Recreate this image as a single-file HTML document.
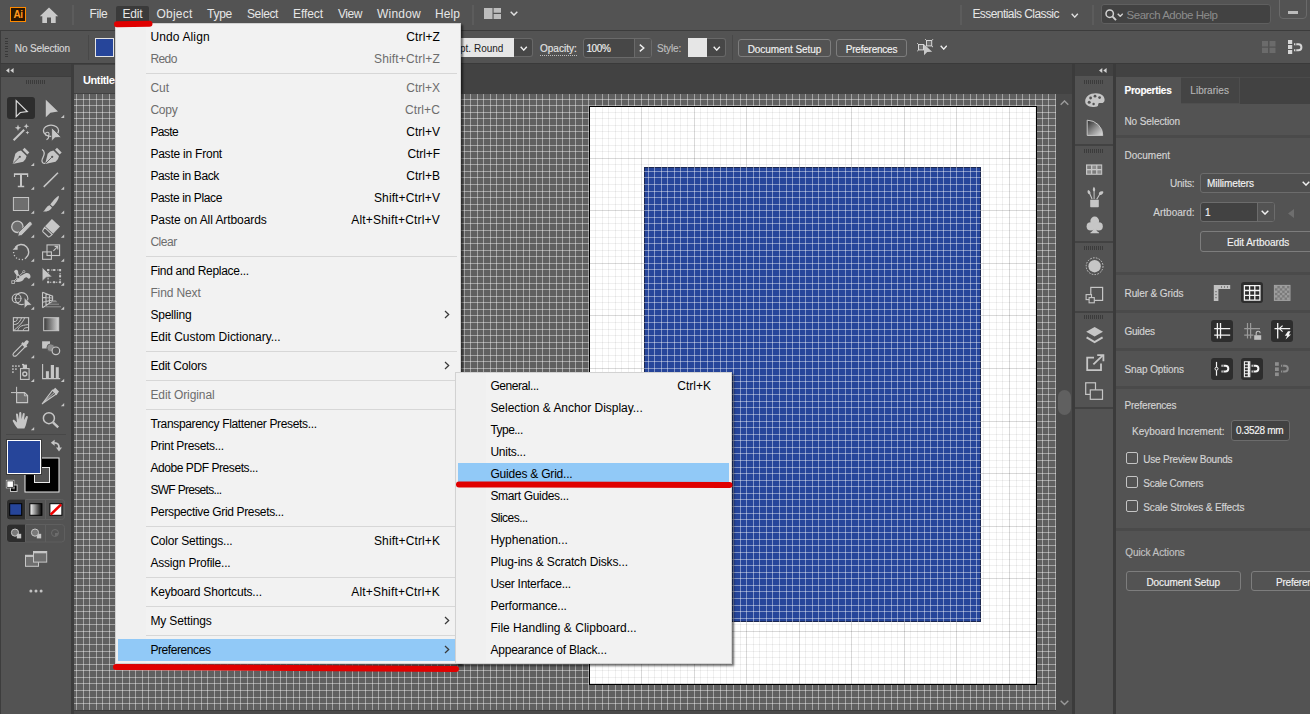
<!DOCTYPE html>
<html><head><meta charset="utf-8"><title>Illustrator</title>
<style>
*{box-sizing:border-box;margin:0;padding:0}
html,body{width:1310px;height:714px;overflow:hidden;background:#535353;font-family:"Liberation Sans",sans-serif;color:#dcdcdc;font-size:11px}
.abs{position:absolute}
#menubar{position:absolute;left:0;top:0;width:1310px;height:30px;background:#535353}
#menubar .mi{position:absolute;top:6px;font-size:13px;color:#e4e4e4;line-height:16px;white-space:nowrap}
#ctrl{position:absolute;left:0;top:30px;width:1310px;height:34px;background:#535353;border-top:1px solid #3c3c3c;border-bottom:1px solid #3a3a3a;box-shadow:inset 1px 0 0 #3c3c3c}
#tabs{position:absolute;left:72px;top:64px;width:1002px;height:30px;background:#424242}
#tab1{position:absolute;left:2px;top:1px;width:250px;height:28px;background:#535353;color:#fff;font-weight:bold;font-size:11px;line-height:30px;padding-left:9px;letter-spacing:-0.4px;white-space:nowrap;overflow:hidden}
#tools{position:absolute;left:0;top:64px;width:74px;height:650px;background:#535353;border-right:3px solid #3d3d3d}
#canvas{position:absolute;left:74px;top:94px;width:982px;height:616px;background:#606060;overflow:hidden}
#vscroll{position:absolute;left:1056px;top:94px;width:16px;height:620px;background:#4a4a4a}
#hscroll{position:absolute;left:74px;top:710px;width:982px;height:4px;background:#4a4a4a;border-top:1px solid #3d3d3d}
#dock{position:absolute;left:1072px;top:64px;width:44px;height:650px;background:#535353;border-left:3px solid #3b3b3b;border-right:3px solid #3b3b3b}
#props{position:absolute;left:1116px;top:64px;width:194px;height:650px;background:#535353}
.menu{position:absolute;background:#f2f2f2;border:1px solid #d2d2d2;color:#000;font-size:12px;padding:2px;box-shadow:2px 2px 2px rgba(0,0,0,.55)}
.menu:before{content:"";position:absolute;left:0;top:0;bottom:0;width:30px;background:#f0f0f0}
.menu .it{position:relative;height:22px;line-height:22px;white-space:nowrap}
.menu .it span.l{position:absolute;left:32.4px;top:0}
.menu .it span.r{position:absolute;right:18px;top:0}
.menu .it .chev{position:absolute;right:8.5px;top:6px}
.menu .dis{color:#6d6d6d}
.menu .sep{position:relative;height:7px}
.menu .sep i{position:absolute;left:28px;right:1px;top:3px;height:1px;background:#d7d7d7}
.menu .hl{background:#91c9f7}
#msub .it span.r{right:18px}

#menubar .mi{position:absolute;top:0;height:30px;line-height:28px;font-size:12px;color:#e6e6e6;white-space:nowrap}
.vsep{position:absolute;width:2px;background:#5c5c5c}
.chev{display:block}
#ctrl .lbl{-webkit-text-stroke:0.15px currentColor;margin-top:0.5px;position:absolute;font-size:10px;line-height:12px;white-space:nowrap}
.btn{-webkit-text-stroke:0.15px currentColor;position:absolute;border:1px solid #7d7d7d;border-radius:3px;color:#f2f2f2;font-size:10px;text-align:center;white-space:nowrap}
.inp{position:absolute;background:#474747;border:1px solid #6a6a6a;border-radius:3px;color:#f0f0f0;font-size:10px;white-space:nowrap}

.pg{position:absolute;left:0;top:0;width:0;height:0}
.t{-webkit-text-stroke:0.15px currentColor;margin-top:0.5px;position:absolute;font-size:10px;line-height:12px;white-space:nowrap;color:#d4d4d4}
.hd{position:absolute;background:#424242}
.dv{position:absolute;background:#4a4a4a;height:3px;left:1116px;width:194px}
.grip{position:absolute;height:4px;background:repeating-linear-gradient(90deg,#3b3b3b 0,#3b3b3b 1px,transparent 1px,transparent 2px)}
.dk{position:absolute;background:#2d2d2d;border-radius:3px}
.cb{position:absolute;width:12px;height:12px;border:1px solid #c4c4c4;border-radius:2px}
</style></head><body>
<div id="menubar">
<div class="abs" style="left:10px;top:7px;width:16px;height:15px;border:1px solid #ff8a00;background:#2b1600;color:#ff9a1f;font-weight:bold;font-size:10px;line-height:14px;text-align:center;letter-spacing:-0.4px">Ai</div>
<svg class="abs" style="left:39px;top:7px" width="20" height="17" viewBox="0 0 20 17"><path d="M10 0.5L0.8 9.2H3.3V16H8V10.6H12V16H16.7V9.2H19.2Z" fill="#c9c9c9"/></svg>
<div class="vsep" style="left:72px;top:5px;height:20px"></div>
<div class="abs" style="left:116px;top:6px;width:33px;height:17px;background:#3a3a3a;border-radius:2px"></div>
<div class="mi" style="left:89.5px"><span style="letter-spacing:-0.411px">File</span></div>
<div class="mi" style="left:122.5px"><span style="letter-spacing:-0.172px">Edit</span></div>
<div class="mi" style="left:156.5px"><span style="letter-spacing:0.219px">Object</span></div>
<div class="mi" style="left:207px"><span style="letter-spacing:-0.254px">Type</span></div>
<div class="mi" style="left:247px"><span style="letter-spacing:-0.393px">Select</span></div>
<div class="mi" style="left:293px"><span style="letter-spacing:-0.078px">Effect</span></div>
<div class="mi" style="left:338px"><span style="letter-spacing:-0.449px">View</span></div>
<div class="mi" style="left:377px"><span style="letter-spacing:0.219px">Window</span></div>
<div class="mi" style="left:435px"><span style="letter-spacing:0.078px">Help</span></div>
<div class="vsep" style="left:472px;top:5px;height:20px"></div>
<svg class="abs" style="left:484px;top:8px" width="17" height="11" viewBox="0 0 17 11"><path d="M0 0h8.5v11H0zM9.6 0H17v4.8H9.6zM9.6 6.1H17V11H9.6z" fill="#bdbdbd"/></svg>
<svg class="abs" style="left:509.5px;top:11px" width="8" height="5" viewBox="0 0 8 5"><path d="M0.7 0.7L4.0 4.1L7.3 0.7" fill="none" stroke="#e0e0e0" stroke-width="1.4"/></svg>
<div class="vsep" style="left:960px;top:5px;height:20px"></div>
<div class="mi" style="left:972.4px"><span style="letter-spacing:-0.567px">Essentials Classic</span></div>
<svg class="abs" style="left:1071px;top:13px" width="7.5" height="5" viewBox="0 0 7.5 5"><path d="M0.7 0.7L3.75 4.1L6.8 0.7" fill="none" stroke="#e0e0e0" stroke-width="1.4"/></svg>
<div class="vsep" style="left:1092px;top:5px;height:20px"></div>
<div class="abs" style="left:1101px;top:4px;width:170px;height:20px;background:#424242;border:1px solid #5f5f5f;border-radius:3px"></div>
<svg class="abs" style="left:1104.5px;top:9px" width="12" height="12" viewBox="0 0 12 12"><circle cx="4.7" cy="4.7" r="3.7" fill="none" stroke="#d2d2d2" stroke-width="1.5"/><path d="M7.4 7.4L11 11.2" stroke="#d2d2d2" stroke-width="1.9"/></svg>
<svg class="abs" style="left:1116.5px;top:12.5px" width="6.5" height="4.2" viewBox="0 0 6.5 4.2"><path d="M0.7 0.7L3.25 3.3000000000000003L5.8 0.7" fill="none" stroke="#cfcfcf" stroke-width="1.4"/></svg>
<div class="mi" style="left:1126.6px;color:#8c8c8c;line-height:31px"><span style="font-size:11.5px"><span style="letter-spacing:-0.489px">Search Adobe Help</span></span></div>
<div class="abs" style="left:1279px;top:-4px;width:28px;height:23px;border:1px solid #6a6a6a;border-radius:4px"></div>
<div class="abs" style="left:1288px;top:10.5px;width:10px;height:3px;background:#bcbcbc"></div>
</div>
<div id="ctrl"><div class="abs" style="left:0;top:-31px;width:1310px;height:0">
<div class="abs" style="left:5px;top:38px;width:3px;height:19px;background:repeating-linear-gradient(180deg,#393939 0,#393939 1px,transparent 1px,transparent 2.6px)"></div>
<div class="lbl" style="left:14.8px;top:42px;color:#d8d8d8"><span style="letter-spacing:-0.125px">No Selection</span></div>
<div class="vsep" style="left:88px;top:35px;height:25px;background:#484848;width:1px"></div>
<div class="abs" style="left:95px;top:38px;width:19px;height:19px;background:#26459a;border:1px solid #e4e4e4"></div>
<div class="abs" style="left:440px;top:38px;width:74px;height:19px;background:#e6e6e6;color:#1c1c1c;font-size:10px;line-height:21px;padding-left:20px;white-space:nowrap"><span style="letter-spacing:0.003px">pt. Round</span></div>
<div class="abs" style="left:514px;top:38px;width:19px;height:19px;background:#474747;border:1px solid #686868;border-left:none;border-radius:0 3px 3px 0"></div>
<svg class="abs" style="left:520px;top:45.5px" width="7.5" height="5" viewBox="0 0 7.5 5"><path d="M0.7 0.7L3.75 4.1L6.8 0.7" fill="none" stroke="#f0f0f0" stroke-width="1.4"/></svg>
<div class="lbl" style="left:540px;top:42px;color:#e4e4e4;border-bottom:1px dotted #bdbdbd;padding-bottom:0px"><span style="letter-spacing:0.014px">Opacity:</span></div>
<div class="inp" style="left:582.5px;top:37.5px;width:69px;height:20px"></div>
<div class="abs" style="left:633.5px;top:38.5px;width:1px;height:18px;background:#6a6a6a"></div>
<div class="abs" style="left:634.5px;top:38.5px;width:16px;height:18px;background:#535353;border-radius:0 2px 2px 0"></div>
<div class="lbl" style="left:586.4px;top:42px;color:#f0f0f0"><span style="letter-spacing:-0.345px">100%</span></div>
<svg class="abs" style="left:638.5px;top:44px" width="6" height="8" viewBox="0 0 6 8"><path d="M0.8 0.6L4.8 4L0.8 7.4" fill="none" stroke="#f0f0f0" stroke-width="1.4"/></svg>
<div class="lbl" style="left:657px;top:42px;color:#bdbdbd"><span style="letter-spacing:-0.169px">Style:</span></div>
<div class="abs" style="left:688px;top:38px;width:19px;height:19px;background:#e6e6e6"></div>
<div class="abs" style="left:707px;top:38px;width:19px;height:19px;background:#474747;border:1px solid #686868;border-left:none;border-radius:0 3px 3px 0"></div>
<svg class="abs" style="left:713px;top:45.5px" width="7.5" height="5" viewBox="0 0 7.5 5"><path d="M0.7 0.7L3.75 4.1L6.8 0.7" fill="none" stroke="#f0f0f0" stroke-width="1.4"/></svg>
<div class="vsep" style="left:732px;top:35px;height:25px;background:#484848;width:1px"></div>
<div class="btn" style="left:738px;top:38.5px;width:93px;height:18.5px;line-height:19px"><span style="letter-spacing:-0.057px">Document Setup</span></div>
<div class="btn" style="left:836px;top:38.5px;width:71px;height:18.5px;line-height:19px"><span style="letter-spacing:-0.220px">Preferences</span></div>
<svg class="abs" style="left:915px;top:38px" width="20" height="19" viewBox="915 38 20 19"><g stroke="#d6d6d6" stroke-width="1"><rect x="918.5" y="44.5" width="5" height="5.4" fill="#6e6e6e"/><rect x="926.5" y="40.5" width="5.2" height="5.4" fill="#6e6e6e"/><path d="M917.2 43.2L918.5 44.5M917.2 51.2L918.5 49.9M925.2 39.2L926.5 40.5M933 39.2L931.7 40.5M933 47.2L931.7 45.9" fill="none"/></g><path d="M924 44.2V55.3L927.2 52L932.2 51.8Z" fill="#c8c8c8"/></svg>
<svg class="abs" style="left:939.7px;top:44.5px" width="7.5" height="5" viewBox="0 0 7.5 5"><path d="M0.7 0.7L3.75 4.1L6.8 0.7" fill="none" stroke="#f0f0f0" stroke-width="1.4"/></svg>
<svg class="abs" style="left:1262px;top:40.5px" width="14" height="12" viewBox="0 0 14 12"><path d="M0 0h6v5.5H0zM7.5 0h6v5.5h-6zM0 6.8h6V12H0zM7.5 6.8h6V12h-6z" fill="#6b6b6b"/></svg>
<svg class="abs" style="left:1287px;top:39px" width="17" height="16" viewBox="1287 39 17 16"><path d="M1288 40h4.2v4H1288zM1288 45h4.2v4H1288zM1288 50h4.2v4H1288z" fill="#d6d6d6"/><path d="M1294 44.2H1298.4a3 3 0 0 1 0 6H1294" fill="none" stroke="#d6d6d6" stroke-width="2"/><path d="M1295.8 43V45.4M1295.8 49V51.4" stroke="#535353" stroke-width="0.9"/></svg>
</div></div>
<div id="tabs"><div id="tab1">Untitled-1* @ 66.67% (RGB/GPU Preview)</div></div>
<div id="tools"></div>
<div class="pg" id="tools2">
<div class="hd" style="left:1px;top:64px;width:70px;height:12px"></div>
<div class="abs" style="left:1px;top:76px;width:70px;height:1px;background:#3d3d3d"></div>
<div class="abs" style="left:0;top:64px;width:1px;height:650px;background:#3d3d3d"></div>
<svg class="abs" style="left:6px;top:68.3px" width="8" height="5" viewBox="0 0 8 5"><path d="M3.3 0L0 2.5L3.3 5ZM7.6 0L4.3 2.5L7.6 5Z" fill="#d2d2d2"/></svg>
<div class="grip" style="left:26px;top:80px;width:20px"></div>
<div class="dk" style="left:7px;top:97px;width:28px;height:22px"></div>
<!--TI0--><svg class="abs" style="left:0;top:0" width="76" height="714" viewBox="0 0 76 714"><defs><linearGradient id="tg" x1="0" x2="1" y1="0" y2="0"><stop offset="0" stop-color="#383838"/><stop offset="1" stop-color="#d6d6d6"/></linearGradient><linearGradient id="wg" x1="0" x2="1" y1="0" y2="0"><stop offset="0" stop-color="#fff"/><stop offset="1" stop-color="#000"/></linearGradient></defs><path d="M16.2 100.6V116.6L20.3 112.5L27.3 111.6Z" fill="none" stroke="#dedede" stroke-width="1.2" stroke-linejoin="miter"/><path d="M45.8 99.8V117.2L50.4 112.7L58 111.5Z" fill="#c6c6c6"/><path d="M64.2 114.7V118H60.900000000000006Z" fill="#c6c6c6"/><path d="M13.6 140.2L24.2 129.8" stroke="#c6c6c6" stroke-width="2" stroke-linecap="butt"/><path d="M18 124.6L18.896 126.904L21.2 127.8L18.896 128.696L18 131.0L17.104 128.696L14.8 127.8L17.104 126.904Z" fill="#c6c6c6"/><path d="M26.3 123.5L27.084 125.51599999999999L29.1 126.3L27.084 127.084L26.3 129.1L25.516000000000002 127.084L23.5 126.3L25.516000000000002 125.51599999999999Z" fill="#c6c6c6"/><path d="M27.4 130.7L27.932 132.06799999999998L29.299999999999997 132.6L27.932 133.132L27.4 134.5L26.868 133.132L25.5 132.6L26.868 132.06799999999998Z" fill="#c6c6c6"/><ellipse cx="51" cy="130.8" rx="7.6" ry="5.6" fill="none" stroke="#c6c6c6" stroke-width="1.3"/><circle cx="47.3" cy="134" r="1.8" fill="none" stroke="#c6c6c6" stroke-width="1.1"/><path d="M48.5 135.5Q49.5 138 46.5 139.8" fill="none" stroke="#c6c6c6" stroke-width="1.1"/><path d="M51.6 127.6V141.2L55 137.8L61.2 137.2Z" fill="#c6c6c6" stroke="#535353" stroke-width="0.8"/><path d="M12.7 163.9L15.3 153.8Q17.6 150.8 21 150.4L26.6 156Q26.2 159.4 23.2 161.8Z" fill="#c6c6c6"/><path d="M13.2 163.4L19.3 157.3" stroke="#535353" stroke-width="0.9"/><circle cx="19.8" cy="156.8" r="1.1" fill="#535353"/><path d="M22.6 149.7L24.6 147.7L29.3 152.4L27.3 154.4Z" fill="#c6c6c6"/><path d="M34.2 162.7V166H30.900000000000002Z" fill="#c6c6c6"/><path d="M45.099999999999994 163.9L47.7 153.8Q50.0 150.8 53.4 150.4L59.0 156Q58.599999999999994 159.4 55.599999999999994 161.8Z" fill="#c6c6c6"/><path d="M45.599999999999994 163.4L51.7 157.3" stroke="#535353" stroke-width="0.9"/><circle cx="52.2" cy="156.8" r="1.1" fill="#535353"/><path d="M55.0 149.7L57.0 147.7L61.7 152.4L59.7 154.4Z" fill="#c6c6c6"/><path d="M42 149.4C46.5 152 43.5 156.5 42.3 159C41.2 161.8 42.8 163.6 45 163.4" fill="none" stroke="#c6c6c6" stroke-width="1.2"/><path d="M13.9 173.3H28.2V177H27V175H22V185.8H24.2V187.2H17.8V185.8H20V175H15.1V177H13.9Z" fill="#c6c6c6"/><path d="M34.2 186.5V189.8H30.900000000000002Z" fill="#c6c6c6"/><path d="M43.7 186.9L58 172.8" stroke="#c6c6c6" stroke-width="1.5"/><path d="M64.2 186.5V189.8H60.900000000000006Z" fill="#c6c6c6"/><rect x="13.4" y="197.5" width="15.2" height="13" fill="#6e6e6e" stroke="#c6c6c6" stroke-width="1"/><path d="M34.2 210.5V213.8H30.900000000000002Z" fill="#c6c6c6"/><path d="M58.8 195.7C59.4 198.5 56 203.5 52.6 206.6L50.3 204.4C53 200.7 56.5 196.6 58.8 195.7Z" fill="#c6c6c6"/><path d="M49.6 205.2L51.9 207.4C50.8 210.6 46.5 211.8 42.9 211.5C45.6 210 45.8 206.6 49.6 205.2Z" fill="#c6c6c6"/><path d="M64.2 210.5V213.8H60.900000000000006Z" fill="#c6c6c6"/><circle cx="17.4" cy="226.8" r="5.7" fill="#6e6e6e" stroke="#c6c6c6" stroke-width="1.3"/><path d="M17.9 236.2L18.6 232.4L29.2 221.8Q31 221.2 31.9 222.9L32.2 224.4L21.8 235.3Z" fill="#c6c6c6" stroke="#535353" stroke-width="0.7"/><path d="M34.2 234.5V237.8H30.900000000000002Z" fill="#c6c6c6"/><path d="M51.9 219L60 226.5L53.2 233.8L45.1 226.3Z" fill="#c6c6c6"/><path d="M44.6 227.4L52.2 234.5L49.7 236.6Q48.8 237.2 47.9 236.5L43 231.9Q42.3 231 43 230.1Z" fill="none" stroke="#c6c6c6" stroke-width="1.1"/><path d="M64.2 234.5V237.8H60.900000000000006Z" fill="#c6c6c6"/><path d="M15.25 247.4A7.5 7.5 0 1 1 25.8 257.9" fill="none" stroke="#c6c6c6" stroke-width="1.4"/><path d="M25.8 257.9A7.5 7.5 0 0 1 13.6 251.6" fill="none" stroke="#c6c6c6" stroke-width="1.3" stroke-dasharray="1.2 1.9"/><path d="M12.6 249.8L17.6 244.8V249.8Z" fill="#c6c6c6"/><path d="M34.2 258.5V261.8H30.900000000000002Z" fill="#c6c6c6"/><rect x="47" y="244.9" width="12.6" height="10.6" fill="none" stroke="#c6c6c6" stroke-width="1.1"/><rect x="42.6" y="251.9" width="8.8" height="7.4" fill="none" stroke="#c6c6c6" stroke-width="1.1"/><path d="M53.4 250.8L57.6 246.6M54.6 246.4H57.8V249.6" fill="none" stroke="#c6c6c6" stroke-width="1.1"/><path d="M64.2 258.5V261.8H60.900000000000006Z" fill="#c6c6c6"/><path d="M14 271.5C15.5 268.5 18.5 269.5 18.2 272.5C18 275 20.5 276.5 23 274.5C26 272 30 272.5 30.5 276C30.8 278.5 28.5 279.5 27.6 278C26.5 276.5 24.5 277.5 23.6 279.6C22.4 282 18.5 282.6 14.2 281.6C16.6 279.8 17.6 277.6 16.4 275.2C15.8 273.8 14.6 273.2 14 271.5Z" fill="#c6c6c6"/><path d="M12.8 282.2L24.2 271.2" stroke="#535353" stroke-width="1.6"/><path d="M12.8 282.2L24.2 271.2" stroke="#c6c6c6" stroke-width="0.9"/><rect x="11.8" y="280.8" width="2.6" height="2.6" fill="#535353" stroke="#c6c6c6" stroke-width="0.8"/><circle cx="18.2" cy="277" r="1.6" fill="#535353" stroke="#c6c6c6" stroke-width="0.8"/><circle cx="23.8" cy="271.6" r="1.1" fill="#535353" stroke="#c6c6c6" stroke-width="0.7"/><path d="M34.2 282.5V285.8H30.900000000000002Z" fill="#c6c6c6"/><rect x="48.1" y="270" width="12" height="12.2" fill="none" stroke="#c6c6c6" stroke-width="1.1" stroke-dasharray="1.6 1.4"/><rect x="47.1" y="269" width="2" height="2" fill="#c6c6c6"/><rect x="53.1" y="269" width="2" height="2" fill="#c6c6c6"/><rect x="59.1" y="269" width="2" height="2" fill="#c6c6c6"/><rect x="59.1" y="275.1" width="2" height="2" fill="#c6c6c6"/><rect x="47.1" y="281.2" width="2" height="2" fill="#c6c6c6"/><rect x="53.1" y="281.2" width="2" height="2" fill="#c6c6c6"/><rect x="59.1" y="281.2" width="2" height="2" fill="#c6c6c6"/><path d="M42.2 267.4V281.2L46.2 277.4L52.2 276.8Z" fill="#c6c6c6" stroke="#535353" stroke-width="0.6"/><path d="M64.2 282.5V285.8H60.900000000000006Z" fill="#c6c6c6"/><circle cx="16.6" cy="298.4" r="4.4" fill="none" stroke="#c6c6c6" stroke-width="1.1"/><ellipse cx="21.6" cy="298.6" rx="6.3" ry="6" fill="none" stroke="#c6c6c6" stroke-width="1.1"/><path d="M14.4 298.4H22" stroke="#c6c6c6" stroke-width="1" stroke-dasharray="1 1"/><path d="M24.2 297.6V308.6L27.2 305.6L32 305Z" fill="#c6c6c6" stroke="#535353" stroke-width="0.7"/><path d="M34.2 306.5V309.8H30.900000000000002Z" fill="#c6c6c6"/><path d="M42.5 292.3V307.8M42.5 292.3L52.6 296.2V301.2L42.5 307.8M46 293.7V305.5M49.4 295V303.3M42.5 297.4L52.6 298M42.5 302.2L52.6 300" fill="none" stroke="#c6c6c6" stroke-width="1.1"/><path d="M53.4 300.2H55.8L57.4 302.2H50.5Z" fill="#8a8a8a"/><path d="M48.5 304.2H59M45.5 306.8H61" stroke="#9a9a9a" stroke-width="0.9"/><path d="M64.2 306.5V309.8H60.900000000000006Z" fill="#c6c6c6"/><rect x="13.4" y="317.7" width="15.2" height="13" fill="none" stroke="#c6c6c6" stroke-width="1.1"/><path d="M13.4 330.7C17 328 23.5 322 24.6 317.7M13.4 324.5C17 324.8 19.5 323 21.6 317.7M17.8 330.7C18.4 327 20.6 325.2 28.6 324.6M23.4 330.7C23.2 328.4 24.8 327.6 28.6 327.4M17.2 317.7C17.6 320.2 16.4 322 13.4 321.6" fill="none" stroke="#c6c6c6" stroke-width="1"/><rect x="43.7" y="317.7" width="15" height="13" fill="url(#tg)" stroke="#c6c6c6" stroke-width="1"/><path d="M13.4 355.8Q12.4 354.6 13.6 353.2L22.4 344.4L25 347L16.2 355.8Q14.8 356.8 13.4 355.8Z" fill="none" stroke="#c6c6c6" stroke-width="1.1"/><path d="M21.2 343.6L22.8 342L23.8 343Q25.5 340.4 26.6 340.2Q28.2 340.2 28.8 341.6Q28.8 343.4 26.4 345.2L27.4 346.2L25.8 347.8Z" fill="#c6c6c6"/><path d="M34.2 355.0V358.3H30.900000000000002Z" fill="#c6c6c6"/><rect x="42.1" y="341.3" width="7.9" height="7.2" fill="#c6c6c6"/><circle cx="50.8" cy="347.8" r="3.9" fill="#8c8c8c" stroke="#535353" stroke-width="0.8"/><circle cx="55.9" cy="350.8" r="3.8" fill="#535353" stroke="#c6c6c6" stroke-width="1.2"/><rect x="20.5" y="368.6" width="8.6" height="10.8" fill="none" stroke="#c6c6c6" stroke-width="1.1"/><rect x="22.8" y="364.6" width="4.2" height="4" fill="#c6c6c6"/><rect x="22" y="363.9" width="2" height="1.4" fill="#c6c6c6"/><circle cx="24.8" cy="374" r="2" fill="none" stroke="#c6c6c6" stroke-width="1.4"/><rect x="12" y="365.2" width="1.8" height="1.8" fill="#a8a8a8"/><rect x="15" y="365.2" width="1.8" height="1.8" fill="#a8a8a8"/><rect x="18" y="365.2" width="1.8" height="1.8" fill="#a8a8a8"/><rect x="12" y="368.2" width="1.8" height="1.8" fill="#a8a8a8"/><rect x="15" y="368.2" width="1.8" height="1.8" fill="#a8a8a8"/><rect x="12" y="371.2" width="1.8" height="1.8" fill="#a8a8a8"/><path d="M34.2 378.7V382H30.900000000000002Z" fill="#c6c6c6"/><path d="M42.6 364V378.6H60.2" fill="none" stroke="#c6c6c6" stroke-width="1.1"/><rect x="45.9" y="371.2" width="3" height="7" fill="#c6c6c6"/><rect x="50.8" y="365" width="3.2" height="13.2" fill="#c6c6c6"/><rect x="55.8" y="367.2" width="3" height="11" fill="#c6c6c6"/><path d="M64.2 378.7V382H60.900000000000006Z" fill="#c6c6c6"/><path d="M16.6 392.6H24.6L27.6 395.6V402.6H16.6Z" fill="#6e6e6e" stroke="#c6c6c6" stroke-width="1.1"/><path d="M24.4 392.6V395.8H27.6" fill="none" stroke="#c6c6c6" stroke-width="0.9"/><path d="M11 392.6H16M16.6 386.8V392" stroke="#c6c6c6" stroke-width="1"/><path d="M42.2 403.8L52.6 390.2L56.6 393.8Z" fill="none" stroke="#c6c6c6" stroke-width="1.1" stroke-linejoin="round"/><path d="M42.8 403.2L54.8 392" stroke="#c6c6c6" stroke-width="0.9"/><path d="M52.2 390.4L55.3 387.8L59 391.6L56.4 395.2Z" fill="#c6c6c6"/><path d="M64.2 403.0V406.3H60.900000000000006Z" fill="#c6c6c6"/><path d="M17.6 428.4C15.6 426.5 14 423.4 12.8 421.2C12.4 420 13.6 419.4 14.6 420.2L17 422.6L16 414.6C16 413.2 17.8 413.2 18 414.6L19 419.4L19.2 413C19.4 411.6 21.2 411.6 21.3 413L21.6 419.2L22.8 413.8C23.2 412.5 24.8 412.8 24.7 414.2L24 420L26 416.4C26.8 415.4 28.2 416 27.8 417.4C26.8 420.6 26.4 424.6 24.4 428.4Z" fill="#c6c6c6"/><path d="M34.2 427.0V430.3H30.900000000000002Z" fill="#c6c6c6"/><circle cx="48.9" cy="418.2" r="5.5" fill="none" stroke="#c6c6c6" stroke-width="1.5"/><path d="M53 422.4L58.2 427.4" stroke="#c6c6c6" stroke-width="2.4"/><rect x="6" y="434" width="60" height="1" fill="#484848"/><rect x="25" y="458" width="34" height="34" fill="#000" stroke="#e8e8e8" stroke-width="1"/><rect x="34.5" y="467.5" width="15" height="15" fill="#535353" stroke="#e8e8e8" stroke-width="1"/><rect x="6.5" y="439.5" width="35" height="35" fill="#fff" stroke="#3a3a3a" stroke-width="1"/><rect x="8" y="441" width="32" height="32" fill="#26459a"/><path d="M54.2 442.8C58 442.6 59.2 445 59 448" fill="none" stroke="#c6c6c6" stroke-width="1.8"/><path d="M50.8 442.8L54.6 439.8V445.8Z" fill="#c6c6c6"/><path d="M56 447.4H62L59 451.4Z" fill="#c6c6c6"/><rect x="10.5" y="485" width="6.6" height="6.4" fill="#000" stroke="#dcdcdc" stroke-width="0.9"/><rect x="12.6" y="487" width="2.4" height="2.4" fill="#535353"/><rect x="6.8" y="480.8" width="6.6" height="6.6" fill="#fff" stroke="#000" stroke-width="0.9"/><rect x="6.2" y="480.2" width="7.8" height="7.8" fill="none" stroke="#dcdcdc" stroke-width="0.6"/><rect x="7" y="499.5" width="57.5" height="20" rx="3" fill="none" stroke="#5f5f5f" stroke-width="1"/><path d="M10 499.5H25.5V519.5H10A3 3 0 0 1 7 516.5V502.5A3 3 0 0 1 10 499.5Z" fill="#2d2d2d"/><path d="M25.5 499.5V519.5M45.5 499.5V519.5" stroke="#5f5f5f" stroke-width="1"/><rect x="9.7" y="503.7" width="12" height="11.6" fill="#26459a" stroke="#000" stroke-width="1"/><rect x="29.9" y="503.7" width="12" height="11.6" fill="url(#wg)" stroke="#000" stroke-width="1"/><rect x="49.9" y="503.7" width="12" height="11.6" fill="#fff" stroke="#000" stroke-width="1"/><path d="M50.6 514.6L61.2 504.4" stroke="#f00000" stroke-width="2.6"/><rect x="7" y="524.5" width="57.5" height="17.5" rx="3" fill="none" stroke="#5f5f5f" stroke-width="1"/><path d="M10 524.5H25.5V542H10A3 3 0 0 1 7 539V527.5A3 3 0 0 1 10 524.5Z" fill="#2d2d2d"/><path d="M25.5 524.5V542M45.5 524.5V542" stroke="#5f5f5f" stroke-width="1"/><circle cx="15" cy="532.6" r="3.6" fill="#7a7a7a" stroke="#c6c6c6" stroke-width="1"/><rect x="16.8" y="533.8" width="4.4" height="4.6" fill="#c6c6c6"/><rect x="36.8" y="533.8" width="4.4" height="4.6" fill="#c6c6c6"/><circle cx="35" cy="532.6" r="3.6" fill="#7a7a7a" stroke="#c6c6c6" stroke-width="1"/><circle cx="55" cy="533" r="3.5" fill="none" stroke="#6c6c6c" stroke-width="1"/><path d="M55 533H58.2A3.3 3.3 0 0 1 55 536.3Z" fill="#6c6c6c"/><rect x="25.5" y="555.3" width="13" height="11" fill="#6e6e6e" stroke="#c6c6c6" stroke-width="1"/><rect x="25.5" y="555.3" width="13" height="1.6" fill="#c6c6c6"/><rect x="33.5" y="551.5" width="13.2" height="10.6" fill="#6e6e6e" stroke="#c6c6c6" stroke-width="1"/><rect x="33.5" y="551.5" width="13.2" height="1.8" fill="#c6c6c6"/><circle cx="30.9" cy="591" r="1.5" fill="#c2c2c2"/><circle cx="36" cy="591" r="1.5" fill="#c2c2c2"/><circle cx="41.1" cy="591" r="1.5" fill="#c2c2c2"/></svg><!--TI1-->
</div>
<div id="canvas">
<svg width="982" height="616" viewBox="0 0 982 616" style="position:absolute;left:0;top:0" shape-rendering="crispEdges">
<defs><path id="gv" d="M2.5 0V616M9.5 0V616M15.5 0V616M22.5 0V616M28.5 0V616M35.5 0V616M41.5 0V616M48.5 0V616M55.5 0V616M61.5 0V616M68.5 0V616M74.5 0V616M81.5 0V616M87.5 0V616M94.5 0V616M100.5 0V616M107.5 0V616M114.5 0V616M120.5 0V616M127.5 0V616M133.5 0V616M140.5 0V616M146.5 0V616M153.5 0V616M160.5 0V616M166.5 0V616M173.5 0V616M179.5 0V616M186.5 0V616M192.5 0V616M199.5 0V616M206.5 0V616M212.5 0V616M219.5 0V616M225.5 0V616M232.5 0V616M238.5 0V616M245.5 0V616M252.5 0V616M258.5 0V616M265.5 0V616M271.5 0V616M278.5 0V616M284.5 0V616M291.5 0V616M298.5 0V616M304.5 0V616M311.5 0V616M317.5 0V616M324.5 0V616M330.5 0V616M337.5 0V616M344.5 0V616M350.5 0V616M357.5 0V616M363.5 0V616M370.5 0V616M376.5 0V616M383.5 0V616M390.5 0V616M396.5 0V616M403.5 0V616M409.5 0V616M416.5 0V616M422.5 0V616M429.5 0V616M436.5 0V616M442.5 0V616M449.5 0V616M455.5 0V616M462.5 0V616M468.5 0V616M475.5 0V616M482.5 0V616M488.5 0V616M495.5 0V616M501.5 0V616M508.5 0V616M514.5 0V616M521.5 0V616M528.5 0V616M534.5 0V616M541.5 0V616M547.5 0V616M554.5 0V616M560.5 0V616M567.5 0V616M574.5 0V616M580.5 0V616M587.5 0V616M593.5 0V616M600.5 0V616M606.5 0V616M613.5 0V616M620.5 0V616M626.5 0V616M633.5 0V616M639.5 0V616M646.5 0V616M652.5 0V616M659.5 0V616M666.5 0V616M672.5 0V616M679.5 0V616M685.5 0V616M692.5 0V616M698.5 0V616M705.5 0V616M712.5 0V616M718.5 0V616M725.5 0V616M731.5 0V616M738.5 0V616M744.5 0V616M751.5 0V616M758.5 0V616M764.5 0V616M771.5 0V616M777.5 0V616M784.5 0V616M790.5 0V616M797.5 0V616M804.5 0V616M810.5 0V616M817.5 0V616M823.5 0V616M830.5 0V616M836.5 0V616M843.5 0V616M850.5 0V616M856.5 0V616M863.5 0V616M869.5 0V616M876.5 0V616M882.5 0V616M889.5 0V616M896.5 0V616M902.5 0V616M909.5 0V616M915.5 0V616M922.5 0V616M928.5 0V616M935.5 0V616M942.5 0V616M948.5 0V616M955.5 0V616M961.5 0V616M968.5 0V616M974.5 0V616M981.5 0V616"/><path id="gh" d="M0 5.5H982M0 11.5H982M0 18.5H982M0 24.5H982M0 31.5H982M0 37.5H982M0 44.5H982M0 51.5H982M0 57.5H982M0 64.5H982M0 70.5H982M0 77.5H982M0 83.5H982M0 90.5H982M0 97.5H982M0 103.5H982M0 110.5H982M0 116.5H982M0 123.5H982M0 129.5H982M0 136.5H982M0 143.5H982M0 149.5H982M0 156.5H982M0 162.5H982M0 169.5H982M0 175.5H982M0 182.5H982M0 189.5H982M0 195.5H982M0 202.5H982M0 208.5H982M0 215.5H982M0 221.5H982M0 228.5H982M0 235.5H982M0 241.5H982M0 248.5H982M0 254.5H982M0 261.5H982M0 267.5H982M0 274.5H982M0 281.5H982M0 287.5H982M0 294.5H982M0 300.5H982M0 307.5H982M0 313.5H982M0 320.5H982M0 327.5H982M0 333.5H982M0 340.5H982M0 346.5H982M0 353.5H982M0 359.5H982M0 366.5H982M0 373.5H982M0 379.5H982M0 386.5H982M0 392.5H982M0 399.5H982M0 405.5H982M0 412.5H982M0 419.5H982M0 425.5H982M0 432.5H982M0 438.5H982M0 445.5H982M0 451.5H982M0 458.5H982M0 465.5H982M0 471.5H982M0 478.5H982M0 484.5H982M0 491.5H982M0 497.5H982M0 504.5H982M0 511.5H982M0 517.5H982M0 524.5H982M0 530.5H982M0 537.5H982M0 543.5H982M0 550.5H982M0 557.5H982M0 563.5H982M0 570.5H982M0 576.5H982M0 583.5H982M0 589.5H982M0 596.5H982M0 603.5H982M0 609.5H982"/><path id="gvmin" d="M2.5 0V616M9.5 0V616M15.5 0V616M22.5 0V616M28.5 0V616M35.5 0V616M48.5 0V616M55.5 0V616M61.5 0V616M68.5 0V616M74.5 0V616M81.5 0V616M87.5 0V616M100.5 0V616M107.5 0V616M114.5 0V616M120.5 0V616M127.5 0V616M133.5 0V616M140.5 0V616M153.5 0V616M160.5 0V616M166.5 0V616M173.5 0V616M179.5 0V616M186.5 0V616M192.5 0V616M206.5 0V616M212.5 0V616M219.5 0V616M225.5 0V616M232.5 0V616M238.5 0V616M245.5 0V616M258.5 0V616M265.5 0V616M271.5 0V616M278.5 0V616M284.5 0V616M291.5 0V616M298.5 0V616M311.5 0V616M317.5 0V616M324.5 0V616M330.5 0V616M337.5 0V616M344.5 0V616M350.5 0V616M363.5 0V616M370.5 0V616M376.5 0V616M383.5 0V616M390.5 0V616M396.5 0V616M403.5 0V616M416.5 0V616M422.5 0V616M429.5 0V616M436.5 0V616M442.5 0V616M449.5 0V616M455.5 0V616M468.5 0V616M475.5 0V616M482.5 0V616M488.5 0V616M495.5 0V616M501.5 0V616M508.5 0V616M521.5 0V616M528.5 0V616M534.5 0V616M541.5 0V616M547.5 0V616M554.5 0V616M560.5 0V616M574.5 0V616M580.5 0V616M587.5 0V616M593.5 0V616M600.5 0V616M606.5 0V616M613.5 0V616M626.5 0V616M633.5 0V616M639.5 0V616M646.5 0V616M652.5 0V616M659.5 0V616M666.5 0V616M679.5 0V616M685.5 0V616M692.5 0V616M698.5 0V616M705.5 0V616M712.5 0V616M718.5 0V616M731.5 0V616M738.5 0V616M744.5 0V616M751.5 0V616M758.5 0V616M764.5 0V616M771.5 0V616M784.5 0V616M790.5 0V616M797.5 0V616M804.5 0V616M810.5 0V616M817.5 0V616M823.5 0V616M836.5 0V616M843.5 0V616M850.5 0V616M856.5 0V616M863.5 0V616M869.5 0V616M876.5 0V616M889.5 0V616M896.5 0V616M902.5 0V616M909.5 0V616M915.5 0V616M922.5 0V616M928.5 0V616M942.5 0V616M948.5 0V616M955.5 0V616M961.5 0V616M968.5 0V616M974.5 0V616M981.5 0V616"/><path id="ghmin" d="M0 5.5H982M0 18.5H982M0 24.5H982M0 31.5H982M0 37.5H982M0 44.5H982M0 51.5H982M0 57.5H982M0 70.5H982M0 77.5H982M0 83.5H982M0 90.5H982M0 97.5H982M0 103.5H982M0 110.5H982M0 123.5H982M0 129.5H982M0 136.5H982M0 143.5H982M0 149.5H982M0 156.5H982M0 162.5H982M0 175.5H982M0 182.5H982M0 189.5H982M0 195.5H982M0 202.5H982M0 208.5H982M0 215.5H982M0 228.5H982M0 235.5H982M0 241.5H982M0 248.5H982M0 254.5H982M0 261.5H982M0 267.5H982M0 281.5H982M0 287.5H982M0 294.5H982M0 300.5H982M0 307.5H982M0 313.5H982M0 320.5H982M0 333.5H982M0 340.5H982M0 346.5H982M0 353.5H982M0 359.5H982M0 366.5H982M0 373.5H982M0 386.5H982M0 392.5H982M0 399.5H982M0 405.5H982M0 412.5H982M0 419.5H982M0 425.5H982M0 438.5H982M0 445.5H982M0 451.5H982M0 458.5H982M0 465.5H982M0 471.5H982M0 478.5H982M0 491.5H982M0 497.5H982M0 504.5H982M0 511.5H982M0 517.5H982M0 524.5H982M0 530.5H982M0 543.5H982M0 550.5H982M0 557.5H982M0 563.5H982M0 570.5H982M0 576.5H982M0 583.5H982M0 596.5H982M0 603.5H982M0 609.5H982"/><path id="gvmaj" d="M41.5 0V616M94.5 0V616M146.5 0V616M199.5 0V616M252.5 0V616M304.5 0V616M357.5 0V616M409.5 0V616M462.5 0V616M514.5 0V616M567.5 0V616M620.5 0V616M672.5 0V616M725.5 0V616M777.5 0V616M830.5 0V616M882.5 0V616M935.5 0V616"/><path id="ghmaj" d="M0 11.5H982M0 64.5H982M0 116.5H982M0 169.5H982M0 221.5H982M0 274.5H982M0 327.5H982M0 379.5H982M0 432.5H982M0 484.5H982M0 537.5H982M0 589.5H982"/>
<clipPath id="cab"><rect x="516" y="13" width="446" height="577"/></clipPath>
<clipPath id="cbl"><rect x="570" y="73" width="337" height="455"/></clipPath>
</defs>
<g fill="none" stroke-width="1" stroke="#fff" stroke-opacity="0.42"><use href="#gv"/><use href="#gh"/></g>
<rect x="515" y="12" width="448" height="579" fill="#000"/>
<rect x="516" y="13" width="446" height="577" fill="#fff"/>
<g fill="none" stroke-width="1" clip-path="url(#cab)" stroke="#000"><g stroke-opacity="0.06"><use href="#gvmin"/><use href="#ghmin"/></g><g stroke-opacity="0.15"><use href="#gvmaj"/><use href="#ghmaj"/></g></g>
<rect x="570" y="73" width="337" height="455" fill="#26459a"/><rect x="570.5" y="73.5" width="336" height="454" fill="none" stroke="#15151f" stroke-opacity="0.6"/>
<g fill="none" stroke-width="1" clip-path="url(#cbl)" stroke="#fff" stroke-opacity="0.42"><use href="#gv"/><use href="#gh"/></g>
</svg>
</div>
<div id="vscroll"></div><div class="abs" style="left:74px;top:711px;width:176px;height:3px;background:#535353;border-right:1px solid #3d3d3d"></div>
<div class="pg"><svg class="abs" style="left:1060px;top:100px" width="9" height="5.5" viewBox="0 0 9 5.5"><path d="M0.7 4.8L4.5 0.9L8.3 4.8" fill="none" stroke="#9a9a9a" stroke-width="1.4"/></svg><svg class="abs" style="left:1060px;top:700px" width="9" height="5.5" viewBox="0 0 9 5.5"><path d="M0.7 0.7L4.5 4.6L8.3 0.7" fill="none" stroke="#9a9a9a" stroke-width="1.4"/></svg>
<div class="abs" style="left:1058px;top:390px;width:13px;height:25px;border-radius:6.5px;background:#606060"></div></div><div id="hscroll"></div>
<div id="dock"></div>
<div class="pg" id="dock2">
<div class="hd" style="left:1075px;top:64px;width:38px;height:12px"></div>
<svg class="abs" style="left:1099px;top:68.3px" width="8" height="5" viewBox="0 0 8 5"><path d="M3.3 0L0 2.5L3.3 5ZM7.6 0L4.3 2.5L7.6 5Z" fill="#d2d2d2"/></svg>
<div class="grip" style="left:1084px;top:80px;width:20px"></div>
<div class="abs" style="left:1075px;top:144px;width:38px;height:2px;background:#424242"></div>
<div class="grip" style="left:1084px;top:149px;width:20px"></div>
<div class="abs" style="left:1075px;top:241px;width:38px;height:2px;background:#424242"></div>
<div class="grip" style="left:1084px;top:246px;width:20px"></div>
<div class="abs" style="left:1075px;top:310.5px;width:38px;height:2px;background:#424242"></div>
<div class="grip" style="left:1084px;top:315px;width:20px"></div>
<div class="abs" style="left:1075px;top:407px;width:38px;height:2px;background:#424242"></div>
<!--DI0--><svg class="abs" style="left:0;top:0" width="1310" height="714" viewBox="0 0 1310 714"><defs><linearGradient id="dg" x1="0" x2="1" y1="0" y2="1"><stop offset="0" stop-color="#2a2a2a"/><stop offset="0.5" stop-color="#8a8a8a"/><stop offset="1" stop-color="#e0e0e0"/></linearGradient></defs><path d="M1085.2 101.6C1085 96.6 1090 93.2 1096 93.3C1101.5 93.4 1104.8 96.4 1104.6 100C1104.4 102.6 1102.6 103.4 1100.8 103C1099 102.6 1098 103.2 1098.2 104.8C1098.4 106.6 1096 107.2 1092.8 107C1088.2 106.8 1085.3 104.8 1085.2 101.6Z" fill="#c6c6c6"/><circle cx="1089.2" cy="102.2" r="1.5" fill="#535353"/><circle cx="1090.6" cy="98" r="1.4" fill="#535353"/><circle cx="1095" cy="96.2" r="1.4" fill="#535353"/><circle cx="1099.6" cy="97.6" r="1.4" fill="#535353"/><circle cx="1093.6" cy="104" r="1.2" fill="#535353"/><path d="M1087.2 135.4V120.2A15.6 15.2 0 0 1 1102.8 135.4Z" fill="url(#dg)" stroke="#c6c6c6" stroke-width="1"/><rect x="1086" y="164.4" width="16.2" height="10.4" fill="#c6c6c6"/><rect x="1087.2" y="165.6" width="3.8" height="3.4" fill="#7a7a7a"/><rect x="1087.2" y="170.29999999999998" width="3.8" height="3.4" fill="#8c8c8c"/><rect x="1092.3" y="165.6" width="3.8" height="3.4" fill="#8c8c8c"/><rect x="1092.3" y="170.29999999999998" width="3.8" height="3.4" fill="#7a7a7a"/><rect x="1097.4" y="165.6" width="3.8" height="3.4" fill="#7a7a7a"/><rect x="1097.4" y="170.29999999999998" width="3.8" height="3.4" fill="#8c8c8c"/><path d="M1090.2 199.8H1098.8V206.6Q1098.8 207.2 1098.2 207.2H1090.8Q1090.2 207.2 1090.2 206.6Z" fill="#c6c6c6"/><path d="M1093.6 199V191.5C1092.4 190.5 1092.6 188.5 1093.9 186.8C1095.4 188.5 1095.6 190.5 1094.6 191.5V199Z" fill="#c6c6c6"/><path d="M1091.6 199.2L1089.4 194.2C1087.6 193.8 1087 191.8 1088 190C1089.8 190.6 1090.8 192 1090.4 193.8L1092.6 198.8Z" fill="#c6c6c6"/><path d="M1096.2 199L1099 194.4C1098.4 192.6 1099.8 191 1102.4 191.2C1103.6 191.4 1103.6 192.6 1102.8 193.4C1102 194.6 1101 195 1099.9 195L1097.2 199.4Z" fill="#c6c6c6"/><circle cx="1094.7" cy="221" r="4.4" fill="#c6c6c6"/><circle cx="1090.7" cy="226.4" r="4.1" fill="#c6c6c6"/><circle cx="1098.7" cy="226.4" r="4.1" fill="#c6c6c6"/><path d="M1093.9 224H1095.5C1095.5 229 1096.6 231.6 1099 232.4V233.2H1090.4V232.4C1092.8 231.6 1093.9 229 1093.9 224Z" fill="#c6c6c6"/><circle cx="1094.6" cy="266.2" r="6.2" fill="#c6c6c6"/><circle cx="1094.6" cy="266.2" r="8.4" fill="none" stroke="#c6c6c6" stroke-width="1" stroke-dasharray="1.6 1.3"/><rect x="1090.8" y="287.4" width="11.8" height="13" fill="none" stroke="#c6c6c6" stroke-width="1.2"/><rect x="1086.1" y="294.6" width="5.4" height="5" fill="#535353" stroke="#c6c6c6" stroke-width="1.1"/><rect x="1089.1" y="297.6" width="5.2" height="5.2" fill="#535353" stroke="#c6c6c6" stroke-width="1.1"/><path d="M1094.6 327L1103 331.8L1094.6 336.6L1086.2 331.8Z" fill="#c6c6c6"/><path d="M1086.6 337.4L1094.6 342.2L1102.6 337.4" fill="none" stroke="#c6c6c6" stroke-width="2"/><path d="M1094 357.6H1087.2V370.2H1101V363.6" fill="none" stroke="#c6c6c6" stroke-width="1.8"/><path d="M1093.4 364.4L1102.8 355.4" stroke="#c6c6c6" stroke-width="1.8"/><path d="M1097.2 355.2H1103.4V361.2" fill="none" stroke="#c6c6c6" stroke-width="1.8"/><rect x="1085.7" y="382.8" width="9.8" height="11.6" fill="none" stroke="#c6c6c6" stroke-width="1.2"/><rect x="1090.3" y="389.9" width="12.2" height="9.4" fill="#535353" stroke="#c6c6c6" stroke-width="1.2"/></svg><!--DI1-->
</div>
<div id="props"></div>
<div class="pg" id="props2">
<div class="hd" style="left:1116px;top:64px;width:194px;height:13px"></div>
<div class="hd" style="left:1116px;top:77px;width:194px;height:27px;border-top:1px solid #4a4a4a"></div>
<div class="abs" style="left:1116px;top:77px;width:65px;height:28px;background:#535353"></div>
<div class="abs" style="left:1181px;top:77px;width:59px;height:27px;background:#444;border:1px solid #4e4e4e;border-left:none"></div>
<div class="t" style="left:1124.5px;top:84.5px;color:#ffffff;font-weight:bold"><span style="letter-spacing:-0.247px">Properties</span></div>
<div class="t" style="left:1190.3px;top:84.5px;color:#b4b4b4"><span style="letter-spacing:0.038px">Libraries</span></div>
<div class="t" style="left:1124.5px;top:115.7px"><span style="letter-spacing:-0.100px">No Selection</span></div>
<div class="dv" style="top:135px"></div>
<div class="t" style="left:1124.5px;top:149.8px"><span style="letter-spacing:0.003px">Document</span></div>
<div class="t" style="left:1169.9px;top:177.5px"><span style="letter-spacing:-0.160px">Units:</span></div>
<div class="abs" style="left:1200px;top:173px;width:120px;height:20px;border:1px solid #6c6c6c;border-radius:3px;background:#4f4f4f"></div>
<div class="t" style="left:1207.1px;top:177.5px;color:#f4f4f4"><span style="letter-spacing:-0.080px">Millimeters</span></div>
<svg class="abs" style="left:1301.5px;top:181px" width="8" height="5" viewBox="0 0 8 5"><path d="M0.7 0.7L4.0 4.1L7.3 0.7" fill="none" stroke="#f0f0f0" stroke-width="1.4"/></svg>
<div class="t" style="left:1153.3px;top:206.5px"><span style="letter-spacing:0.007px">Artboard:</span></div>
<div class="abs" style="left:1200px;top:202px;width:75px;height:20px;border:1px solid #6c6c6c;border-radius:3px;background:#424242"></div>
<div class="abs" style="left:1256.5px;top:203px;width:17.5px;height:18px;background:#535353;border-left:1px solid #6c6c6c;border-radius:0 2px 2px 0"></div>
<div class="t" style="left:1204.9px;top:206px;color:#f4f4f4"><span style="letter-spacing:-1.562px">1</span></div>
<svg class="abs" style="left:1261px;top:210px" width="8" height="5" viewBox="0 0 8 5"><path d="M0.7 0.7L4.0 4.1L7.3 0.7" fill="none" stroke="#f0f0f0" stroke-width="1.4"/></svg>
<svg class="abs" style="left:1287.5px;top:208.5px" width="6" height="9" viewBox="0 0 6 9"><path d="M6 0L0 4.5L6 9Z" fill="#6e6e6e"/></svg>
<div class="btn" style="left:1200px;top:231px;width:120px;height:20.5px;line-height:21px;text-align:left;padding-left:26px"><span style="letter-spacing:-0.044px">Edit Artboards</span></div>
<div class="dv" style="top:272px"></div>
<div class="t" style="left:1124.5px;top:287.8px"><span style="letter-spacing:-0.094px">Ruler &amp; Grids</span></div>
<div class="dk" style="left:1241px;top:281.5px;width:22px;height:21.5px"></div>
<div class="dv" style="top:310px"></div>
<div class="t" style="left:1124.5px;top:325.7px"><span style="letter-spacing:-0.248px">Guides</span></div>
<div class="dk" style="left:1211px;top:319.5px;width:22px;height:22px"></div>
<div class="dk" style="left:1271px;top:319.5px;width:22px;height:22px"></div>
<div class="dv" style="top:348px"></div>
<div class="t" style="left:1124.5px;top:363.5px"><span style="letter-spacing:-0.101px">Snap Options</span></div>
<div class="dk" style="left:1211px;top:357.5px;width:22px;height:22px"></div>
<div class="dk" style="left:1241px;top:357.5px;width:22px;height:22px"></div>
<div class="dv" style="top:386px"></div>
<div class="t" style="left:1124.5px;top:399px"><span style="letter-spacing:-0.193px">Preferences</span></div>
<div class="t" style="left:1132px;top:425.7px"><span style="letter-spacing:-0.017px">Keyboard Increment:</span></div>
<div class="abs" style="left:1230.5px;top:420px;width:59.5px;height:20.5px;border:1px solid #6c6c6c;border-radius:3px;background:#424242"></div>
<div class="t" style="left:1236px;top:424.5px;color:#f4f4f4"><span style="letter-spacing:-0.292px">0.3528 mm</span></div>
<div class="cb" style="left:1126px;top:452.3px"></div>
<div class="cb" style="left:1126px;top:476.3px"></div>
<div class="cb" style="left:1126px;top:500.3px"></div>
<div class="t" style="left:1143.3px;top:453.4px"><span style="letter-spacing:-0.207px">Use Preview Bounds</span></div>
<div class="t" style="left:1143.3px;top:477.5px"><span style="letter-spacing:-0.266px">Scale Corners</span></div>
<div class="t" style="left:1143.3px;top:501.4px"><span style="letter-spacing:-0.144px">Scale Strokes &amp; Effects</span></div>
<div class="dv" style="top:528px"></div>
<div class="t" style="left:1125.3px;top:546.7px;color:#c2c2c2"><span style="letter-spacing:-0.084px">Quick Actions</span></div>
<div class="btn" style="left:1125.5px;top:570.5px;width:115.5px;height:20.5px;line-height:21px"><span style="letter-spacing:-0.057px">Document Setup</span></div>
<div class="btn" style="left:1251px;top:570.5px;width:100px;height:20.5px;line-height:21px;text-align:left;padding-left:24px"><span style="letter-spacing:-0.220px">Preferences</span></div>
</div>
<!--PI0--><svg class="abs" style="left:0;top:0" width="1310" height="714" viewBox="0 0 1310 714"><path d="M1213.8 285H1230.2V289H1218.4V301H1213.8Z" fill="#c0c0c0"/><rect x="1221" y="286.4" width="1" height="1.2" fill="#535353"/><rect x="1224" y="286.4" width="1" height="1.2" fill="#535353"/><rect x="1227" y="286.4" width="1" height="1.2" fill="#535353"/><rect x="1215.4" y="291.20000000000005" width="1.2" height="1" fill="#535353"/><rect x="1215.4" y="294.20000000000005" width="1.2" height="1" fill="#535353"/><rect x="1215.4" y="297.20000000000005" width="1.2" height="1" fill="#535353"/><path d="M1244.4 285.6H1259.9V300.2H1244.4ZM1249.6 285.6V300.2M1254.8 285.6V300.2M1244.4 290.5H1259.9M1244.4 295.4H1259.9" fill="none" stroke="#f4f4f4" stroke-width="1.3"/><rect x="1274.4" y="285.4" width="15.6" height="15" fill="#7a7a7a" stroke="#a4a4a4" stroke-width="1"/><rect x="1275.0" y="286.0" width="2.4" height="2.3" fill="#9c9c9c"/><rect x="1275.0" y="290.6" width="2.4" height="2.3" fill="#9c9c9c"/><rect x="1275.0" y="295.2" width="2.4" height="2.3" fill="#9c9c9c"/><rect x="1277.4" y="288.3" width="2.4" height="2.3" fill="#9c9c9c"/><rect x="1277.4" y="292.9" width="2.4" height="2.3" fill="#9c9c9c"/><rect x="1277.4" y="297.5" width="2.4" height="2.3" fill="#9c9c9c"/><rect x="1279.8" y="286.0" width="2.4" height="2.3" fill="#9c9c9c"/><rect x="1279.8" y="290.6" width="2.4" height="2.3" fill="#9c9c9c"/><rect x="1279.8" y="295.2" width="2.4" height="2.3" fill="#9c9c9c"/><rect x="1282.2" y="288.3" width="2.4" height="2.3" fill="#9c9c9c"/><rect x="1282.2" y="292.9" width="2.4" height="2.3" fill="#9c9c9c"/><rect x="1282.2" y="297.5" width="2.4" height="2.3" fill="#9c9c9c"/><rect x="1284.6" y="286.0" width="2.4" height="2.3" fill="#9c9c9c"/><rect x="1284.6" y="290.6" width="2.4" height="2.3" fill="#9c9c9c"/><rect x="1284.6" y="295.2" width="2.4" height="2.3" fill="#9c9c9c"/><rect x="1287.0" y="288.3" width="2.4" height="2.3" fill="#9c9c9c"/><rect x="1287.0" y="292.9" width="2.4" height="2.3" fill="#9c9c9c"/><rect x="1287.0" y="297.5" width="2.4" height="2.3" fill="#9c9c9c"/><path d="M1217.4 323V338.6M1220.5 323V338.6M1214.2 328.6H1230.2M1214.2 335.2H1230.2" stroke="#f4f4f4" stroke-width="1.3" fill="none"/><path d="M1247.5 323V338.6M1250.6 323V338.6M1244.2 328.6H1260M1244.2 335.2H1253.5" stroke="#9a9a9a" stroke-width="1.2" fill="none"/><rect x="1254.2" y="335.2" width="7" height="4.6" fill="#c0c0c0"/><path d="M1256.2 335.2V333.4A2 2 0 0 1 1260.2 333.2" fill="none" stroke="#c0c0c0" stroke-width="1.1"/><path d="M1277.7 323V338.6M1274.5 328.6H1290.2" stroke="#f4f4f4" stroke-width="1.3" fill="none"/><path d="M1282.6 325.6L1279.4 328.6L1282.6 331.6" stroke="#f4f4f4" stroke-width="1.2" fill="none"/><path d="M1288 331.2H1290.6L1288.8 334.4H1291L1285.6 339.6L1287.2 335.8H1284.8Z" fill="#f4f4f4"/><path d="M1216.5 361.9V375.7" stroke="#f4f4f4" stroke-width="1.2"/><circle cx="1216.5" cy="368.7" r="1.5" fill="#2d2d2d" stroke="#f4f4f4" stroke-width="1"/><path d="M1221.5 365.7H1225.4A2.9 2.9 0 0 1 1225.4 371.5H1221.5" fill="none" stroke="#f4f4f4" stroke-width="2"/><path d="M1223.1 364.5V366.9M1223.1 370.3V372.7" stroke="#2d2d2d" stroke-width="0.9"/><path d="M1244.4 361.8H1249.8V376.8H1244.4ZM1244.4 364.8H1249.8M1244.4 367.8H1249.8M1244.4 370.8H1249.8M1244.4 373.8H1249.8M1249.8 361.8V376.8" fill="none" stroke="#f4f4f4" stroke-width="1.1"/><path d="M1248.6 361.8V376.8" stroke="#f4f4f4" stroke-width="1.6"/><path d="M1251.6 365.7H1255.5A2.9 2.9 0 0 1 1255.5 371.5H1251.6" fill="none" stroke="#f4f4f4" stroke-width="2"/><path d="M1253.1999999999998 364.5V366.9M1253.1999999999998 370.3V372.7" stroke="#2d2d2d" stroke-width="0.9"/><rect x="1275" y="362.2" width="3.8" height="3.6" fill="#8e8e8e"/><rect x="1275" y="367.4" width="3.8" height="3.6" fill="#8e8e8e"/><rect x="1275" y="372.5" width="3.8" height="3.6" fill="#8e8e8e"/><path d="M1281 365.7H1284.9A2.9 2.9 0 0 1 1284.9 371.5H1281" fill="none" stroke="#8e8e8e" stroke-width="2"/><path d="M1282.6 364.5V366.9M1282.6 370.3V372.7" stroke="#535353" stroke-width="0.9"/></svg><!--PI1-->
<!--MENUS-START-->
<div class="menu" id="medit" style="left:115px;top:23px;width:346px">
<div class="it"><span class="l"><span style="letter-spacing:0.135px">Undo Align</span></span><span class="r"><span style="letter-spacing:0.117px">Ctrl+Z</span></span></div>
<div class="it dis"><span class="l"><span style="letter-spacing:-0.572px">Redo</span></span><span class="r"><span style="letter-spacing:0.164px">Shift+Ctrl+Z</span></span></div>
<div class="sep"><i></i></div>
<div class="it dis"><span class="l"><span style="letter-spacing:-0.029px">Cut</span></span><span class="r"><span style="letter-spacing:0.002px">Ctrl+X</span></span></div>
<div class="it dis"><span class="l"><span style="letter-spacing:-0.229px">Copy</span></span><span class="r"><span style="letter-spacing:0.109px">Ctrl+C</span></span></div>
<div class="it"><span class="l"><span style="letter-spacing:-0.617px">Paste</span></span><span class="r"><span style="letter-spacing:0.002px">Ctrl+V</span></span></div>
<div class="it"><span class="l"><span style="letter-spacing:-0.222px">Paste in Front</span></span><span class="r"><span style="letter-spacing:-0.083px">Ctrl+F</span></span></div>
<div class="it"><span class="l"><span style="letter-spacing:-0.367px">Paste in Back</span></span><span class="r"><span style="letter-spacing:0.002px">Ctrl+B</span></span></div>
<div class="it"><span class="l"><span style="letter-spacing:-0.366px">Paste in Place</span></span><span class="r"><span style="letter-spacing:0.108px">Shift+Ctrl+V</span></span></div>
<div class="it"><span class="l"><span style="letter-spacing:-0.081px">Paste on All Artboards</span></span><span class="r"><span style="letter-spacing:0.186px">Alt+Shift+Ctrl+V</span></span></div>
<div class="it dis"><span class="l"><span style="letter-spacing:-0.458px">Clear</span></span></div>
<div class="sep"><i></i></div>
<div class="it"><span class="l"><span style="letter-spacing:-0.298px">Find and Replace...</span></span></div>
<div class="it dis"><span class="l"><span style="letter-spacing:-0.118px">Find Next</span></span></div>
<div class="it"><span class="l"><span style="letter-spacing:-0.213px">Spelling</span></span><svg class="chev" width="6" height="9" viewBox="0 0 6 9"><path d="M1 1L4.7 4.5L1 8" fill="none" stroke="#3a3a3a" stroke-width="1.25"/></svg></div>
<div class="it"><span class="l"><span style="letter-spacing:-0.038px">Edit Custom Dictionary...</span></span></div>
<div class="sep"><i></i></div>
<div class="it"><span class="l"><span style="letter-spacing:-0.208px">Edit Colors</span></span><svg class="chev" width="6" height="9" viewBox="0 0 6 9"><path d="M1 1L4.7 4.5L1 8" fill="none" stroke="#3a3a3a" stroke-width="1.25"/></svg></div>
<div class="sep"><i></i></div>
<div class="it dis"><span class="l"><span style="letter-spacing:-0.090px">Edit Original</span></span></div>
<div class="sep"><i></i></div>
<div class="it"><span class="l"><span style="letter-spacing:-0.344px">Transparency Flattener Presets...</span></span></div>
<div class="it"><span class="l"><span style="letter-spacing:-0.338px">Print Presets...</span></span></div>
<div class="it"><span class="l"><span style="letter-spacing:-0.428px">Adobe PDF Presets...</span></span></div>
<div class="it"><span class="l"><span style="letter-spacing:-0.685px">SWF Presets...</span></span></div>
<div class="it"><span class="l"><span style="letter-spacing:-0.345px">Perspective Grid Presets...</span></span></div>
<div class="sep"><i></i></div>
<div class="it"><span class="l"><span style="letter-spacing:-0.193px">Color Settings...</span></span><span class="r"><span style="letter-spacing:0.108px">Shift+Ctrl+K</span></span></div>
<div class="it"><span class="l"><span style="letter-spacing:-0.193px">Assign Profile...</span></span></div>
<div class="sep"><i></i></div>
<div class="it"><span class="l"><span style="letter-spacing:-0.191px">Keyboard Shortcuts...</span></span><span class="r"><span style="letter-spacing:0.186px">Alt+Shift+Ctrl+K</span></span></div>
<div class="sep"><i></i></div>
<div class="it"><span class="l"><span style="letter-spacing:-0.128px">My Settings</span></span><svg class="chev" width="6" height="9" viewBox="0 0 6 9"><path d="M1 1L4.7 4.5L1 8" fill="none" stroke="#3a3a3a" stroke-width="1.25"/></svg></div>
<div class="sep"><i></i></div>
<div class="it hl"><span class="l"><span style="letter-spacing:-0.418px">Preferences</span></span><svg class="chev" width="6" height="9" viewBox="0 0 6 9"><path d="M1 1L4.7 4.5L1 8" fill="none" stroke="#3a3a3a" stroke-width="1.25"/></svg></div>
</div>
<div class="menu" id="msub" style="left:455px;top:372px;width:277px">
<div class="it"><span class="l"><span style="letter-spacing:-0.440px">General...</span></span><span class="r"><span style="letter-spacing:0.002px">Ctrl+K</span></span></div>
<div class="it"><span class="l"><span style="letter-spacing:-0.031px">Selection &amp; Anchor Display...</span></span></div>
<div class="it"><span class="l"><span style="letter-spacing:-0.533px">Type...</span></span></div>
<div class="it"><span class="l"><span style="letter-spacing:-0.243px">Units...</span></span></div>
<div class="it hl"><span class="l"><span style="letter-spacing:-0.205px">Guides &amp; Grid...</span></span></div>
<div class="it"><span class="l"><span style="letter-spacing:-0.332px">Smart Guides...</span></span></div>
<div class="it"><span class="l"><span style="letter-spacing:-0.535px">Slices...</span></span></div>
<div class="it"><span class="l"><span style="letter-spacing:0.008px">Hyphenation...</span></span></div>
<div class="it"><span class="l"><span style="letter-spacing:-0.144px">Plug-ins &amp; Scratch Disks...</span></span></div>
<div class="it"><span class="l"><span style="letter-spacing:-0.293px">User Interface...</span></span></div>
<div class="it"><span class="l"><span style="letter-spacing:-0.165px">Performance...</span></span></div>
<div class="it"><span class="l"><span style="letter-spacing:0.008px">File Handling &amp; Clipboard...</span></span></div>
<div class="it"><span class="l"><span style="letter-spacing:-0.198px">Appearance of Black...</span></span></div>
</div>
<svg class="abs" style="left:0;top:0;pointer-events:none" width="1310" height="714"><g stroke="#e00000" stroke-width="6" stroke-linecap="round" fill="none">
<path d="M117 24.3L149.5 23.8"/><path d="M116 667L456 669"/><path d="M459 484.5L729.5 485"/></g></svg>
<!--MENUS-END-->
</body></html>
